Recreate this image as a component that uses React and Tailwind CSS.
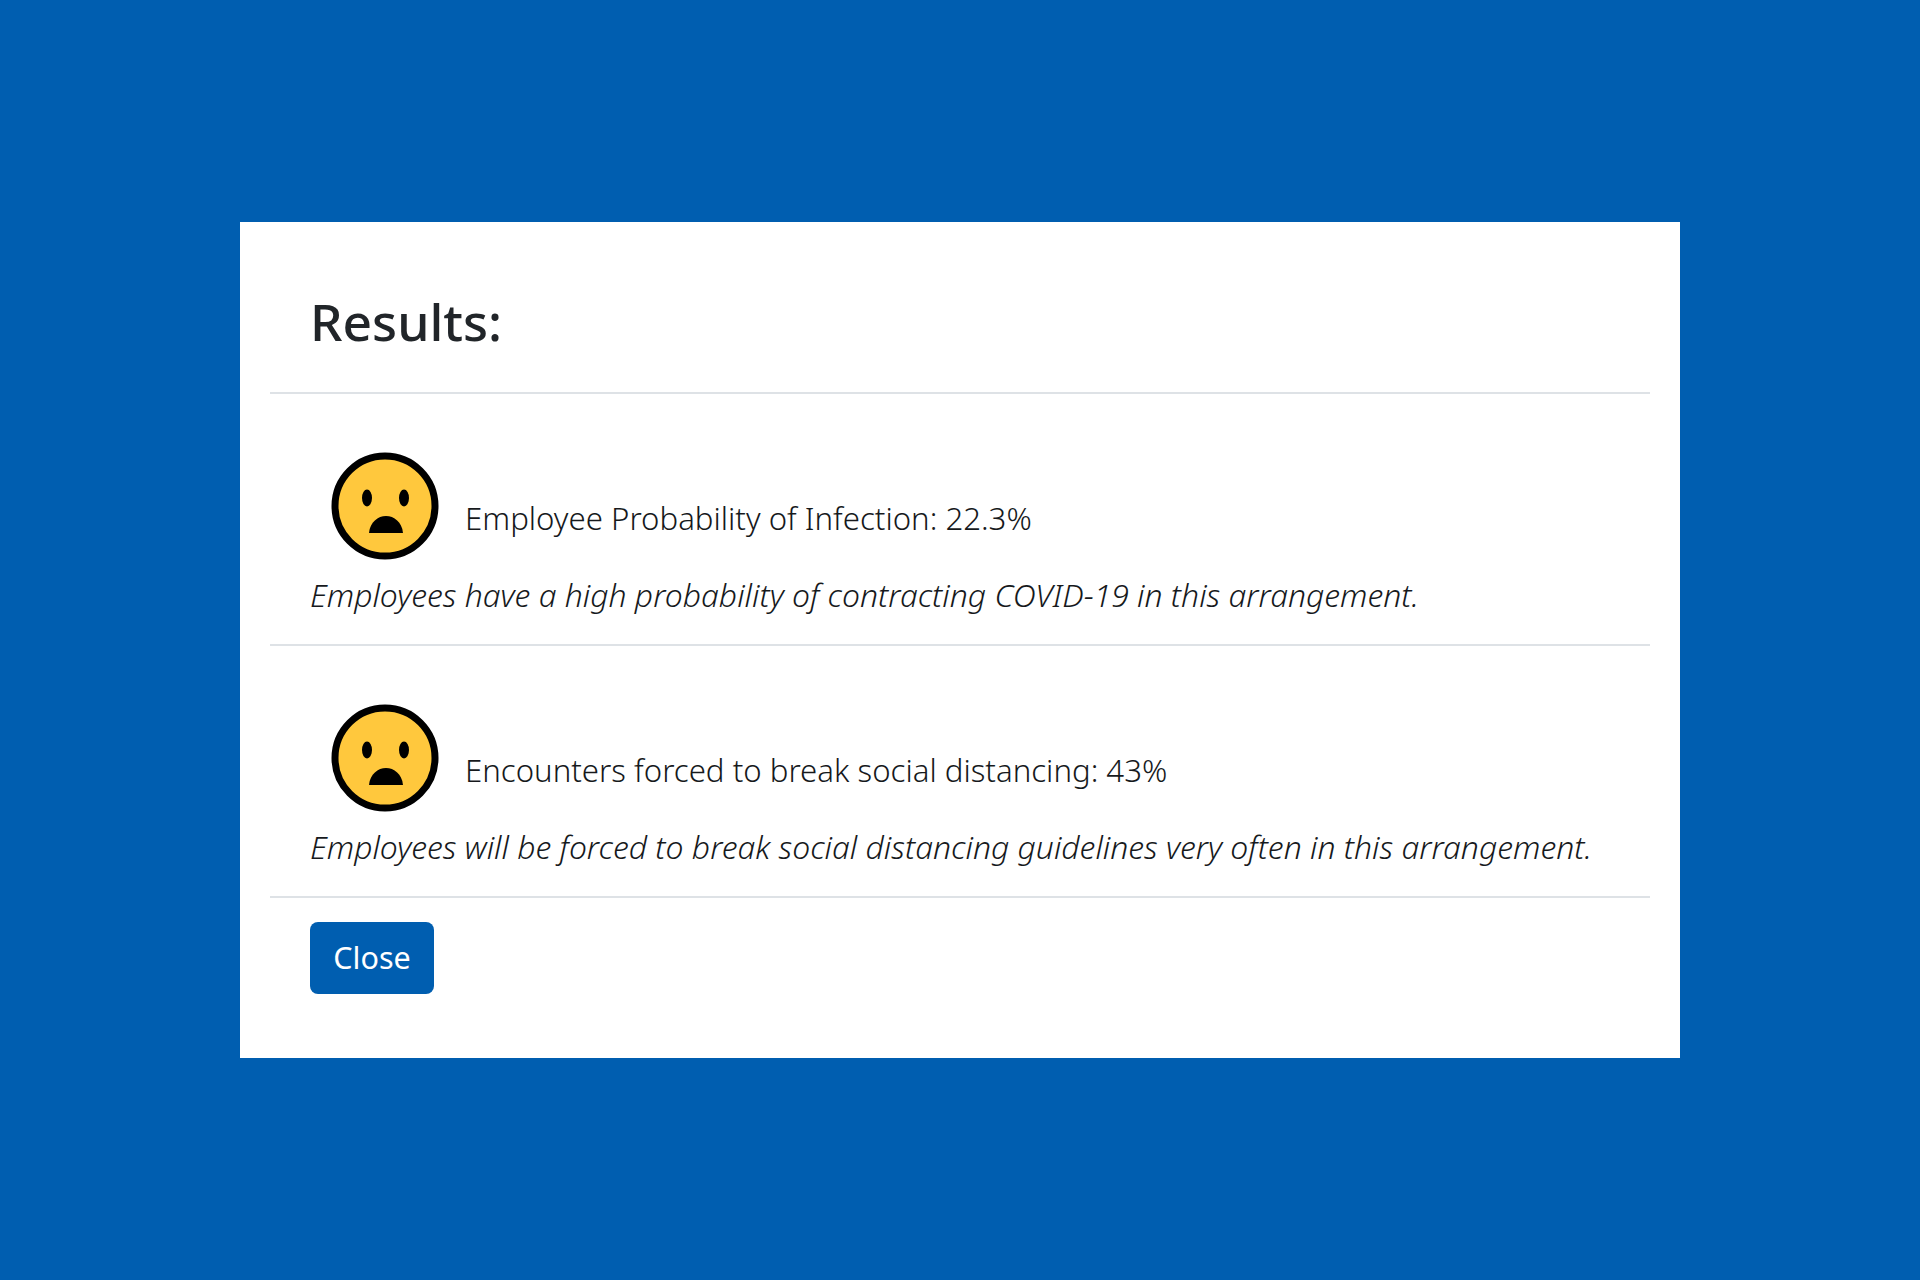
const font = { fontFamily: '"Noto Sans", "Open Sans", sans-serif' };

function Face() {
  return (
    <svg width="108" height="108" viewBox="0 0 108 108" className="block shrink-0">
      <circle cx="54" cy="54" r="50" fill="#ffc83d" stroke="#000" strokeWidth="7" />
      <ellipse cx="36" cy="46" rx="5" ry="8.5" fill="#000" />
      <ellipse cx="73" cy="46" rx="5" ry="8.5" fill="#000" />
      <path d="M38 81 C39 70 47 64 55 64 C63 64 71 70 72 81 Z" fill="#000" />
    </svg>
  );
}

function Row({ label, note }) {
  return (
    <div className="h-[252px] border-b-2 border-[#dee2e6] px-10 pt-[58px]">
      <div className="flex items-end pl-[21px]">
        <Face />
        <span className="mb-[18px] ml-[26px] text-[31.2px] font-light leading-[48px] text-[#16191c]">{label}</span>
      </div>
      <p className="mt-[11px] text-[31.9px] font-light leading-[48px] italic text-[#16191c]">{note}</p>
    </div>
  );
}

export default function App() {
  return (
    <div className="flex h-[1280px] w-[1920px] justify-center bg-[#005eb0] pt-[222px]" style={font}>
      <div className="h-[836px] w-[1440px] bg-white px-[30px]">
        <div className="flex h-[172px] items-center border-b-2 border-[#dee2e6] px-10 pt-[27px]">
          <h1 className="text-[51.5px] font-medium leading-[64px] text-[#212529]">Results:</h1>
        </div>
        <Row label="Employee Probability of Infection: 22.3%" note="Employees have a high probability of contracting COVID-19 in this arrangement." />
        <Row label="Encounters forced to break social distancing: 43%" note="Employees will be forced to break social distancing guidelines very often in this arrangement." />
        <div className="px-10 pt-6">
          <button className="h-[72px] w-[124px] rounded-lg bg-[#005eb0] text-[30.5px] text-white">Close</button>
        </div>
      </div>
    </div>
  );
}
